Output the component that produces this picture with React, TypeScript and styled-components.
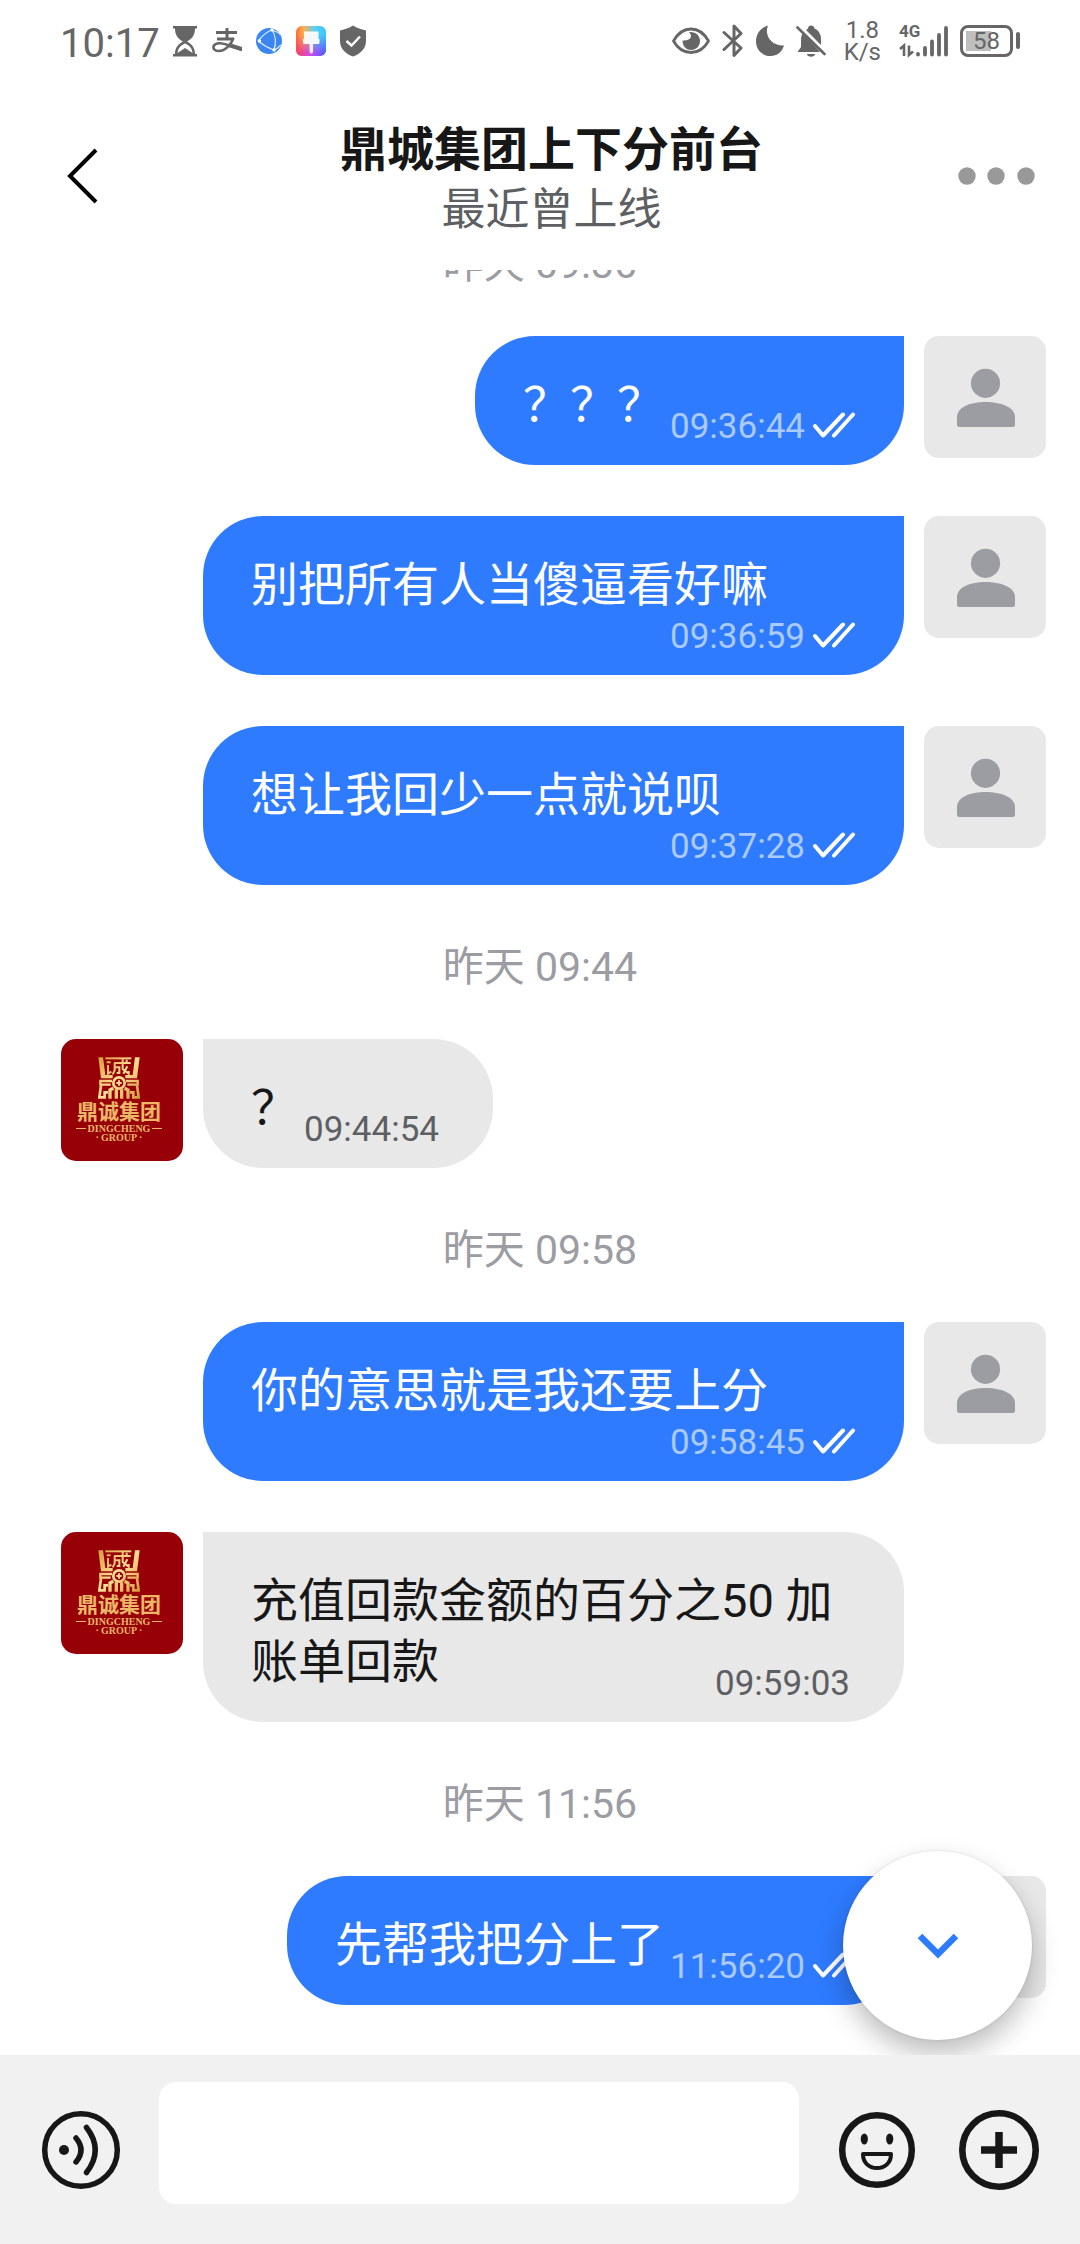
import React from "react";
import styled, { createGlobalStyle, css } from "styled-components";

const GlobalStyle = createGlobalStyle`
  *, *::before, *::after { box-sizing: border-box; }
  html, body { margin: 0; padding: 0; background: #fff; }
  body { font-family: Roboto, "Noto Sans CJK SC", sans-serif; color: #171717; }
  button, input { font: inherit; color: inherit; }
`;

const BLUE = "#2e7bff";

const Screen = styled.div`
  display: flex;
  flex-direction: column;
  height: 100vh;
  background: #fff;
  overflow: hidden;
`;

/* ---------- status bar ---------- */

const StatusBar = styled.div`
  flex: none;
  display: flex;
  justify-content: space-between;
  height: 81px;
  padding: 0 60px;
  color: #666;
`;

const StatusGroup = styled.div<{ $gap: number }>`
  display: flex;
  align-items: center;
  gap: ${(p) => p.$gap}px;
`;

const Clock = styled.time`
  padding-top: 6px;
  margin-right: -2px;
  font-size: 40px;
  line-height: 48px;
`;

const StatusIcon = styled.svg<{ $w: number }>`
  display: block;
  width: ${(p) => p.$w}px;
  height: 36px;
`;

const NetSpeed = styled.div`
  padding: 0 7px;
  font-size: 24px;
  line-height: 22px;
  text-align: center;
`;

const Battery = styled.div`
  display: flex;
  align-items: center;
  gap: 3px;
`;

const BatteryBody = styled.div`
  display: flex;
  align-items: center;
  justify-content: center;
  width: 53px;
  height: 32px;
  border: 3px solid #666;
  border-radius: 8px;
  background: linear-gradient(#bebebe, #bebebe) 3px 3px / 25px 20px no-repeat;
  font-size: 24px;
  line-height: 26px;
`;

const BatteryCap = styled.div`
  width: 4px;
  height: 17px;
  border-radius: 2px;
  background: #666;
`;

/* ---------- chat header ---------- */

const Header = styled.header`
  flex: none;
  display: flex;
  align-items: center;
  height: 189px;
  padding: 0 43px 0 54px;
`;

const IconButton = styled.button<{ $w: number }>`
  flex: none;
  display: flex;
  align-items: center;
  justify-content: center;
  width: ${(p) => p.$w}px;
  height: 80px;
  padding: 0;
  border: 0;
  background: none;
`;

const BackButton = styled(IconButton)`
  justify-content: flex-start;
  padding-left: 12px;
`;

const Titles = styled.div`
  flex: 1;
  min-width: 0;
  padding: 8px 0 0 2px;
  text-align: center;
`;

const Title = styled.h1`
  margin: 0;
  font-size: 47px;
  line-height: 60px;
  font-weight: 700;
`;

const Presence = styled.p`
  margin: 0;
  font-size: 44px;
  line-height: 60px;
  color: #5e5f63;
`;

/* ---------- conversation ---------- */

const Conversation = styled.main`
  position: relative;
  flex: 1;
  min-height: 0;
  display: flex;
  flex-direction: column;
  justify-content: flex-end;
  overflow: hidden;
`;

const List = styled.ol`
  display: flex;
  flex-direction: column;
  gap: 51px;
  margin: 0;
  padding: 0 34px 50px 61px;
  list-style: none;
`;

const Separator = styled.li`
  padding-top: 6px;
  margin-right: 27px;
  height: 52px;
  font-size: 41px;
  line-height: 50px;
  text-align: center;
  color: #9c9ca3;
`;

const Row = styled.li<{ $own: boolean }>`
  display: flex;
  flex-direction: ${(p) => (p.$own ? "row-reverse" : "row")};
  align-items: flex-start;
  gap: 20px;
  padding-${(p) => (p.$own ? "left" : "right")}: 142px;
`;

const Avatar = styled.div<{ $brand?: boolean }>`
  flex: none;
  display: flex;
  flex-direction: column;
  align-items: center;
  width: 122px;
  height: 122px;
  padding-right: ${(p) => (p.$brand ? 6 : 0)}px;
  border-radius: 15px;
  background: ${(p) => (p.$brand ? "#960006" : "#e8e8e8")};
  color: #edb768;
  white-space: nowrap;
`;

const BrandMark = styled.svg`
  width: 42px;
  height: 42px;
  margin-top: 18px;
`;

const BrandName = styled.span`
  padding-top: 2px;
  font-size: 21px;
  line-height: 23px;
  font-weight: 700;
`;

const BrandLatin = styled.span`
  display: flex;
  align-items: center;
  gap: 2px;
  font-family: "Liberation Serif", serif;
  font-size: 10px;
  line-height: 9px;
  font-weight: 700;
`;

const Dash = styled.i`
  width: 10px;
  height: 1px;
  background: currentColor;
`;

const Bubble = styled.div<{ $own: boolean; $overlap?: boolean }>`
  min-width: 0;
  padding: 38px ${(p) => (p.$own ? 49 : 54)}px 23px 48px;
  color: ${(p) => (p.$own ? "#fff" : "#171717")};
  background: ${(p) => (p.$own ? BLUE : "#e8e8e8")};
  border-radius: ${(p) => (p.$own ? "60px 0 60px 60px" : "0 60px 60px 60px")};
  ${(p) =>
    p.$overlap
      ? css`
          display: grid;
          grid-template-areas: "cell";
          > * { grid-area: cell; }
        `
      : css`
          display: flex;
          flex-wrap: wrap;
          align-items: flex-end;
        `}
`;

const Text = styled.p`
  margin: 0;
  padding: 0 6px 7px 0;
  font-size: 47px;
  line-height: 61px;
`;

const Meta = styled.div`
  display: flex;
  align-items: center;
  align-self: end;
  justify-self: end;
  gap: 8px;
  height: 30px;
  margin-left: auto;
`;

const Stamp = styled.time<{ $own: boolean }>`
  font-size: 35px;
  line-height: 30px;
  color: ${(p) => (p.$own ? "#abcaff" : "#5e5f63")};
`;

const JumpButton = styled.button`
  position: absolute;
  right: 48px;
  bottom: 15px;
  display: flex;
  align-items: center;
  justify-content: center;
  width: 189px;
  height: 189px;
  padding: 0;
  border: 0;
  border-radius: 50%;
  background: #fff;
  box-shadow: 0 0 3px rgba(0, 0, 0, 0.12), 0 14px 28px rgba(0, 0, 0, 0.26);
`;

/* ---------- composer ---------- */

const Composer = styled.form`
  flex: none;
  display: flex;
  align-items: flex-end;
  gap: 38px;
  padding: 27px 41px 40px;
  background: #f1f1f1;

  ${IconButton} { margin-bottom: 14px; }
`;

const Field = styled.input`
  flex: 1;
  min-width: 0;
  height: 122px;
  padding: 0 30px;
  border: 0;
  border-radius: 17px;
  outline: 0;
  background: #fff;
  font-size: 47px;
`;

const Tools = styled.div`
  display: flex;
  gap: 42px;
`;

/* ---------- drawings ---------- */

const Ticks = () => (
  <svg width="42" height="30" viewBox="0 0 42 30" fill="none" stroke="#fff" strokeWidth="4" strokeLinecap="round" strokeLinejoin="round">
    <path d="M2 14 L10 23.500 L30 2.500 M21 23.500 L40 2.500" />
  </svg>
);

const PersonAvatar = () => (
  <Avatar>
    <svg width="122" height="122" viewBox="0 0 122 122" fill="#9c9ca3">
      <circle cx="61.500" cy="47.300" r="14.600" />
      <path d="M33 81 C33 71 47 66 61.500 66 C76 66 91 71 91 81 V88.500 Q91 91 88.500 91 H35.500 Q33 91 33 88.500 Z" />
    </svg>
  </Avatar>
);

const BrandAvatar = () => (
  <Avatar $brand>
    <BrandMark viewBox="0 0 126 126" fill="none" stroke="url(#gold)" strokeWidth="8">
      <defs>
        <linearGradient id="gold" gradientUnits="userSpaceOnUse" x1="0" y1="0" x2="126" y2="126">
          <stop offset="0" stopColor="#d99a3c" />
          <stop offset="0.5" stopColor="#ffdf95" />
          <stop offset="1" stopColor="#d6953a" />
        </linearGradient>
      </defs>
      <path d="M1 1 H15 L22 54 H44 V64 H9 Z M125 1 H111 L104 54 H82 V64 H117 Z" fill="url(#gold)" stroke="none" />
      <path d="M22 4 H100" strokeWidth="6" />
      <path d="M26 16 H38 M30 24 V50 L40 44 M48 18 H98 M50 18 V40 L44 52 M50 31 H64 V48 H56 M74 5 V36 L92 50 V42 M88 28 L76 50 M86 8 V15" strokeWidth="6" />
      <circle cx="63" cy="78" r="17" strokeWidth="8" />
      <path d="M63 70 V86 M55 78 H71" strokeWidth="6" />
      <path d="M42 72 H7 V83 H38 M84 72 H119 V83 H88" strokeWidth="7" />
      <path d="M9 85 L4 121 H20 V106 H30 M117 85 L122 121 H106 V106 H96" />
      <path d="M46 94 L36 99 V125 M80 94 L90 99 V125" strokeWidth="10" />
      <path d="M55 97 V125 M71 97 V125" strokeWidth="10" />
    </BrandMark>
    <BrandName>鼎诚集团</BrandName>
    <BrandLatin>
      <Dash />
      DINGCHENG
      <Dash />
    </BrandLatin>
    <BrandLatin>
      <span>·</span>GROUP<span>·</span>
    </BrandLatin>
  </Avatar>
);

const HourglassIcon = () => (
  <StatusIcon $w={30} viewBox="0 0 30 36" fill="#666">
    <path d="M3 3 H27 V5.500 H25 C25 12 22 16 17 18.500 C22 21 25 25 25 31 H27 V33.500 H3 V31 H5 C5 25 8 21 13 18.500 C8 16 5 12 5 5.500 H3 Z" />
    <path d="M7.500 30 C8 25 10.500 22.500 15 20.500 C19.500 22.500 22 25 22.500 30 L15 25 Z" fill="#fff" />
  </StatusIcon>
);

const PayIcon = () => (
  <StatusIcon $w={30} viewBox="0 0 30 36" fill="none" stroke="#666">
    <path d="M4 9.500 H25 M15 5 V16 M5 16 H22" strokeWidth="3" />
    <path d="M21.500 15 C19 22 13 28 7 28 C2 28 0.500 25 2 22.500 C4 19 11 20 17 22.500 L30 27" strokeWidth="2.600" />
    <path d="M17 22 L30 26" strokeWidth="4" />
  </StatusIcon>
);

const BrowserIcon = () => (
  <StatusIcon $w={30} viewBox="0 0 30 36">
    <circle cx="15" cy="18" r="13" fill="#3b86ef" />
    <g fill="none" stroke="#d9e9ff" strokeWidth="1.200">
      <path d="M4 18 C9 12 14 8 18 7 M4 18 C9 22 14 25 20 27 M18 7 C22 13 22 21 20 27 M18 7 C21 8 24 9 27 12 M20 27 C23 26 25 24 27 22" />
    </g>
    <g fill="#fff">
      <circle cx="18" cy="7" r="1.700" />
      <circle cx="5.500" cy="18" r="1.700" />
      <circle cx="20" cy="27" r="1.700" />
    </g>
  </StatusIcon>
);

const ThemeIcon = () => (
  <StatusIcon $w={30} viewBox="0 0 30 36">
    <defs>
      <linearGradient id="rainbow" x1="0" y1="0" x2="1" y2="0">
        <stop offset="0" stopColor="#ff6a3c" />
        <stop offset="0.25" stopColor="#ffae4a" />
        <stop offset="0.6" stopColor="#5fd0f0" />
        <stop offset="1" stopColor="#35c6ff" />
      </linearGradient>
      <linearGradient id="rainbowLow" x1="0" y1="0" x2="1" y2="0">
        <stop offset="0" stopColor="#ff3f5c" />
        <stop offset="0.5" stopColor="#c94cf0" />
        <stop offset="1" stopColor="#4a5cff" />
      </linearGradient>
      <linearGradient id="fade" x1="0" y1="0" x2="0" y2="1">
        <stop offset="0.3" stopColor="#fff" stopOpacity="0" />
        <stop offset="0.9" stopColor="#fff" />
      </linearGradient>
      <mask id="fadeMask">
        <rect y="3" width="30" height="30" fill="url(#fade)" />
      </mask>
    </defs>
    <rect y="3" width="30" height="30" rx="6" fill="url(#rainbow)" />
    <rect y="3" width="30" height="30" rx="6" fill="url(#rainbowLow)" mask="url(#fadeMask)" />
    <path d="M8 8.500 H22.500 V16 H23.500 V20 Q23.500 21 22 21 H17 V28 Q17 30.500 15.300 30.500 Q13.600 30.500 13.600 28 V21 H8.500 Q7 21 7 19.500 V16 H8 Z" fill="#fff" fillOpacity="0.92" />
  </StatusIcon>
);

const ShieldIcon = () => (
  <StatusIcon $w={30} viewBox="0 0 30 36">
    <path d="M15 2.500 C19 5 23 6 28 7.500 V18 C28 26 22 31 15 33.500 C8 31 2 26 2 18 V7.500 C7 6 11 5 15 2.500 Z" fill="#666" />
    <path d="M8.500 18 L13.500 22.500 L22 13.500" fill="none" stroke="#fff" strokeWidth="2.400" />
  </StatusIcon>
);

const EyeIcon = () => (
  <StatusIcon $w={40} viewBox="0 0 40 36">
    <path d="M2.500 18 C7 10 13 6 20 6 C27 6 33 10 37.500 18 C33 26 27 29.500 20 29.500 C13 29.500 7 26 2.500 18 Z" fill="none" stroke="#666" strokeWidth="2.800" strokeLinejoin="round" />
    <path d="M18 9 C22 13 20 18 11.500 17.500 C11.500 23 15 27 20 27 C25 27 29 23 29 18 C29 12.500 25 8.500 18 9 Z" fill="#666" />
  </StatusIcon>
);

const BluetoothIcon = () => (
  <StatusIcon $w={22} viewBox="0 0 22 36">
    <path d="M2 9.500 L19 25 L12 32.500 V3 L19 10.500 L2 26.500" fill="none" stroke="#666" strokeWidth="3" strokeLinejoin="round" strokeLinecap="round" />
  </StatusIcon>
);

const MoonIcon = () => (
  <StatusIcon $w={30} viewBox="0 0 30 36">
    <path d="M13 2.500 C9 12 16 23 29 22.500 C27 29 22 33 15.500 33 C7 33 1 26.500 1 18.500 C1 10.500 6 4.500 13 2.500 Z" fill="#666" />
  </StatusIcon>
);

const MutedIcon = () => (
  <StatusIcon $w={30} viewBox="0 0 30 36" fill="#666">
    <path d="M7 10 C5.500 12 5 14 5 17 V24 L1.500 29 H24 Z M10 7 L12 5.500 C12 1.500 18 1.500 18.500 5.500 C22.500 7 25 11 25 16 V22 Z M11 31 H19 C19 34.500 11 34.500 11 31 Z" />
    <path d="M1.500 4.500 L28.500 31" stroke="#666" strokeWidth="2.600" strokeLinecap="round" />
  </StatusIcon>
);

const SignalText = styled.span`
  display: block;
  font-size: 17px;
  line-height: 16px;
  font-weight: 700;
`;

const Signal = styled.div`
  display: grid;
  grid-template-areas: "cell";
  width: 50px;
  height: 36px;
  > * { grid-area: cell; }
`;

const SignalIcon = () => (
  <Signal>
    <SignalText>4G</SignalText>
    <svg width="50" height="36" viewBox="0 0 50 36" fill="none" stroke="#666" strokeWidth="3.800" strokeLinecap="round">
      <path d="M19 31.500 V31 M26 31.500 V25 M33 31.500 V18.500 M40 31.500 V12 M47 31.500 V5" />
      <path d="M1 26 L5 22.500 V33 M10 22.500 V32 L14 28.500" strokeWidth="2.600" strokeLinecap="butt" />
    </svg>
  </Signal>
);

/* ---------- data ---------- */

type Entry =
  | { kind: "day"; label: string }
  | { kind: "msg"; own: boolean; text: string; time: string; overlap?: boolean };

const entries: Entry[] = [
  { kind: "day", label: "昨天 09:36" },
  { kind: "msg", own: true, text: "？？？", time: "09:36:44" },
  { kind: "msg", own: true, text: "别把所有人当傻逼看好嘛", time: "09:36:59" },
  { kind: "msg", own: true, text: "想让我回少一点就说呗", time: "09:37:28" },
  { kind: "day", label: "昨天 09:44" },
  { kind: "msg", own: false, text: "？", time: "09:44:54" },
  { kind: "day", label: "昨天 09:58" },
  { kind: "msg", own: true, text: "你的意思就是我还要上分", time: "09:58:45" },
  { kind: "msg", own: false, text: "充值回款金额的百分之50 加账单回款", time: "09:59:03", overlap: true },
  { kind: "day", label: "昨天 11:56" },
  { kind: "msg", own: true, text: "先帮我把分上了", time: "11:56:20" },
];

const Message = ({ own, text, time, overlap }: { own: boolean; text: string; time: string; overlap?: boolean }) => (
  <Row $own={own}>
    {own ? <PersonAvatar /> : <BrandAvatar />}
    <Bubble $own={own} $overlap={overlap}>
      <Text>{text}</Text>
      <Meta>
        <Stamp $own={own}>{time}</Stamp>
        {own && <Ticks />}
      </Meta>
    </Bubble>
  </Row>
);

export default function App() {
  return (
    <Screen>
      <GlobalStyle />
      <StatusBar>
        <StatusGroup $gap={12}>
          <Clock>10:17</Clock>
          <HourglassIcon />
          <PayIcon />
          <BrowserIcon />
          <ThemeIcon />
          <ShieldIcon />
        </StatusGroup>
        <StatusGroup $gap={11}>
          <EyeIcon />
          <BluetoothIcon />
          <MoonIcon />
          <MutedIcon />
          <NetSpeed>
            1.8
            <br />
            K/s
          </NetSpeed>
          <SignalIcon />
          <Battery>
            <BatteryBody>58</BatteryBody>
            <BatteryCap />
          </Battery>
        </StatusGroup>
      </StatusBar>

      <Header>
        <BackButton type="button" $w={90} aria-label="返回">
          <svg width="32" height="56" viewBox="0 0 32 56" fill="none" stroke="#000" strokeWidth="4">
            <path d="M30 2 L4 28 L30 54" />
          </svg>
        </BackButton>
        <Titles>
          <Title>鼎城集团上下分前台</Title>
          <Presence>最近曾上线</Presence>
        </Titles>
        <IconButton type="button" $w={80} aria-label="更多">
          <svg width="78" height="18" viewBox="0 0 78 18" fill="#999">
            <circle cx="9" cy="9" r="8.700" />
            <circle cx="38" cy="9" r="8.700" />
            <circle cx="68" cy="9" r="8.700" />
          </svg>
        </IconButton>
      </Header>

      <Conversation>
        <List>
          {entries.map((e, i) =>
            e.kind === "day" ? <Separator key={i}>{e.label}</Separator> : <Message key={i} {...e} />
          )}
        </List>
        <JumpButton type="button" aria-label="回到底部">
          <svg width="42" height="26" viewBox="0 0 42 26" fill="none" stroke={BLUE} strokeWidth="6.500">
            <path d="M3 3 L21 21 L39 3" />
          </svg>
        </JumpButton>
      </Conversation>

      <Composer onSubmit={(e) => e.preventDefault()}>
        <IconButton type="button" $w={80} aria-label="语音">
          <svg width="80" height="80" viewBox="-40 -40 80 80" fill="none" stroke="#171717" strokeWidth="5.500" strokeLinecap="round">
            <circle r="36.300" />
            <circle cx="-17" r="5" fill="#171717" stroke="none" />
            <path d="M-5 -12 Q5 0 -5 12 M5.500 -22.500 Q23 0 5.500 22.500" />
          </svg>
        </IconButton>
        <Field type="text" aria-label="消息" />
        <Tools>
          <IconButton type="button" $w={80} aria-label="表情">
            <svg width="80" height="80" viewBox="-40 -40 80 80" fill="none" stroke="#171717">
              <circle r="34.800" strokeWidth="6.500" />
              <g fill="#171717" stroke="none">
                <ellipse cx="-12.700" cy="-11" rx="3.600" ry="5.600" />
                <ellipse cx="12.700" cy="-11" rx="3.600" ry="5.600" />
              </g>
              <path d="M-14 4 H14 C14 13 8 18 0 18 C-8 18 -14 13 -14 4 Z" strokeWidth="4" strokeLinejoin="round" />
            </svg>
          </IconButton>
          <IconButton type="button" $w={80} aria-label="添加">
            <svg width="80" height="80" viewBox="-40 -40 80 80" fill="none" stroke="#171717">
              <circle r="36.700" strokeWidth="6.600" />
              <path d="M-18 0 H18 M0 -18 V18" strokeWidth="7.500" />
            </svg>
          </IconButton>
        </Tools>
      </Composer>
    </Screen>
  );
}
